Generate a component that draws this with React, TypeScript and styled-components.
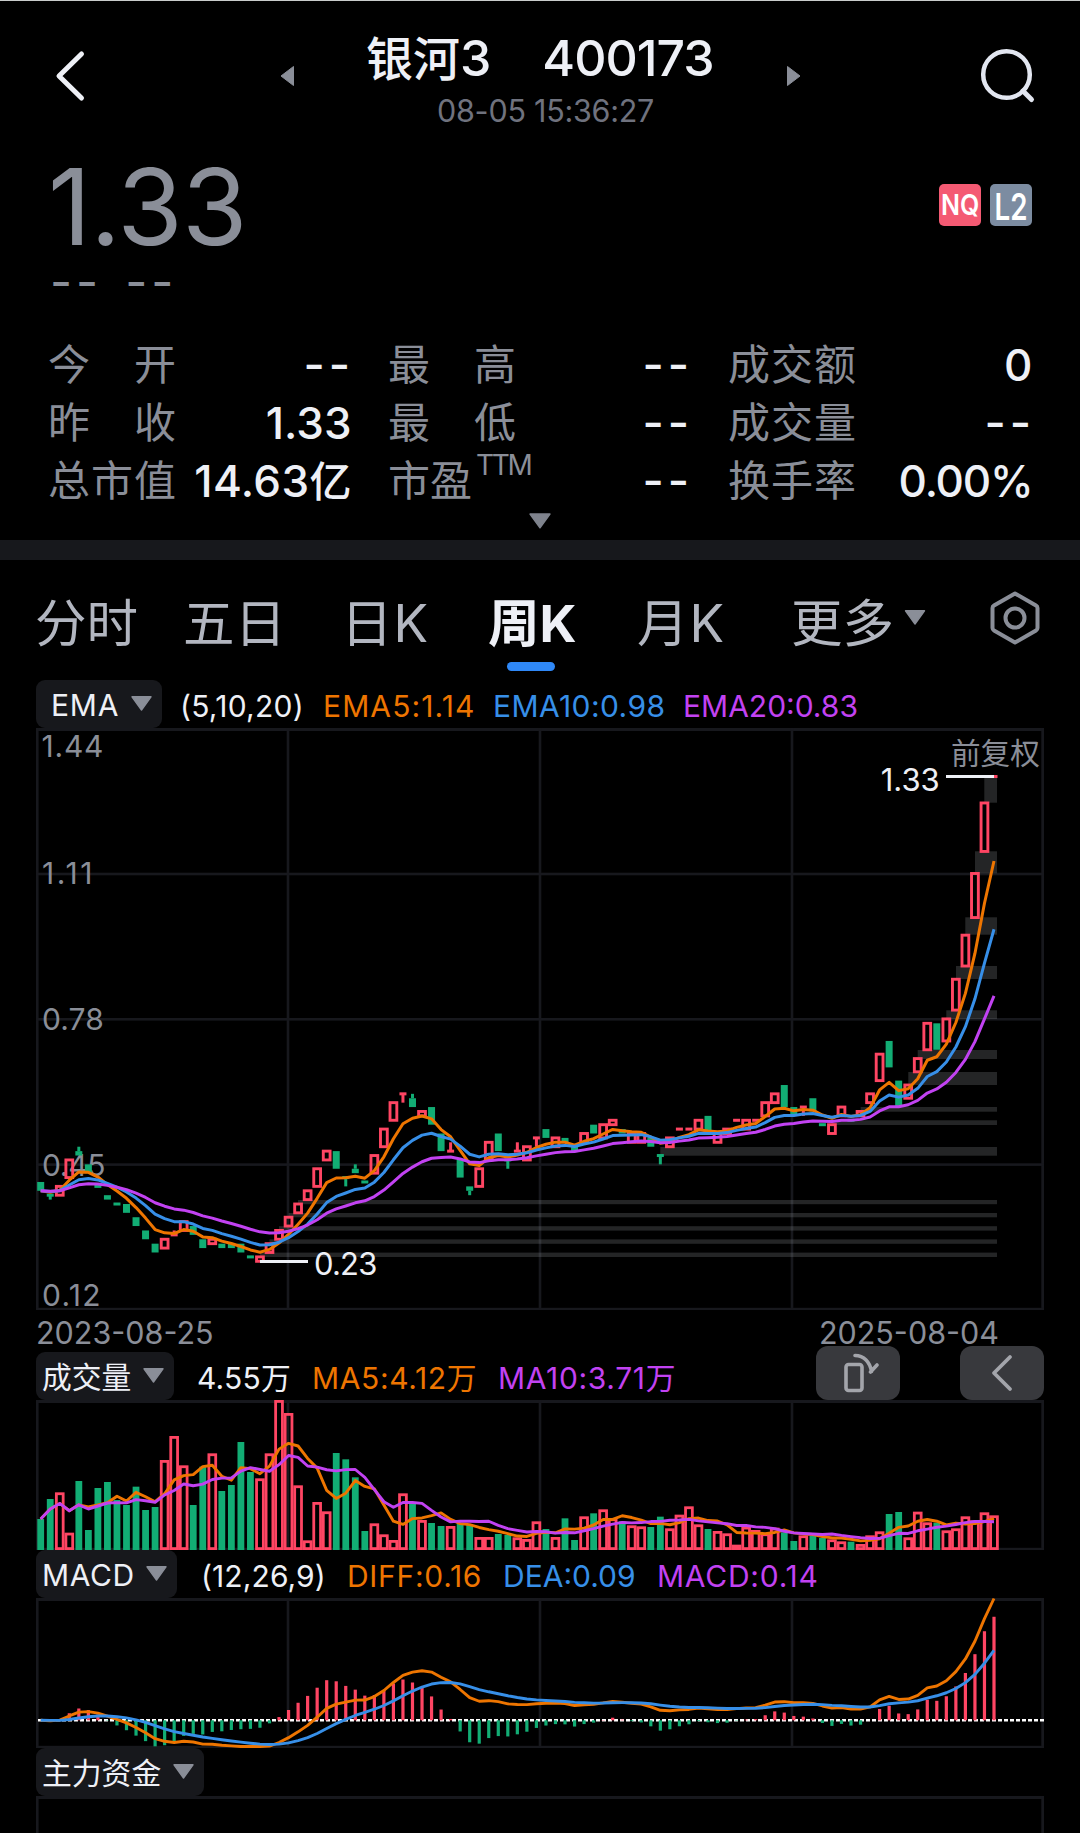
import React from 'react';
import styled, { createGlobalStyle } from 'styled-components';

const C = {
  bg: '#000000',
  band: '#17181c',
  grid: '#17181d',
  text: '#eef0f6',
  muted: '#8a8e98',
  dim: '#6f727e',
  tab: '#b2b6c0',
  red: '#ff4563',
  green: '#12ad74',
  orange: '#ee7500',
  blue: '#378fe8',
  purple: '#c242f2',
};

const FONT = `Inter, "Noto Sans CJK SC", sans-serif`;

const Global = createGlobalStyle`
  html, body { margin: 0; padding: 0; background: ${C.bg}; }
  * { box-sizing: border-box; }
`;

const Page = styled.main`
  width: 1080px;
  height: 1833px;
  overflow: hidden;
  background: ${C.bg};
  color: ${C.text};
  font-family: ${FONT};
  border-top: 1px solid #c9cccb;
  display: flex;
  flex-direction: column;
`;

/* ---------- header ---------- */
const Header = styled.header`
  height: 132px;
  flex: none;
  display: grid;
  grid-template-columns: 280px 20px 1fr 20px 280px;
  align-items: start;
`;
const IconCell = styled.div<{ $top: number; $left?: number }>`
  padding-top: ${(p) => p.$top}px;
  padding-left: ${(p) => p.$left ?? 0}px;
  svg { display: block; }
`;
const TitleBlock = styled.div`
  display: flex;
  flex-direction: column;
  align-items: flex-start;
  padding: 27px 0 0 66px;
`;
const Title = styled.h1`
  margin: 0;
  font-size: 50px;
  font-weight: 500;
  line-height: 60px;
  display: flex;
  gap: 51px;
  white-space: nowrap;
`;
const Name = styled.span`
  font-size: 47px;
  b { font-weight: 500; font-size: 50px; }
`;
const Code = styled.span`
  letter-spacing: -1px;
`;
const Stamp = styled.time`
  margin: 3px 0 0 71px;
  font-size: 30.5px;
  line-height: 37px;
  letter-spacing: -0.25px;
  color: ${C.dim};
  white-space: nowrap;
`;

/* ---------- quote ---------- */
const Quote = styled.section`
  height: 407px;
  flex: none;
  padding: 0 48px;
`;
const PriceRow = styled.div`
  display: flex;
  justify-content: space-between;
  height: 128px;
`;
const Price = styled.div`
  font-size: 106px;
  line-height: 130px;
  margin-top: 9px;
  letter-spacing: -0.8px;
  color: ${C.muted};
`;
const Badges = styled.div`
  display: flex;
  gap: 9px;
  padding-top: 51px;
`;
const Badge = styled.span<{ $bg: string; $size: number; $squeeze: number; $drop?: number }>`
  width: 42px;
  height: 42px;
  border-radius: 5px;
  background: ${(p) => p.$bg};
  color: #fff;
  display: flex;
  align-items: center;
  justify-content: center;
  font-size: ${(p) => p.$size}px;
  font-weight: 600;
  line-height: 42px;
  padding-top: ${(p) => p.$drop ?? 0}px;
  span { transform: scaleX(${(p) => p.$squeeze}); }
`;
const Change = styled.div`
  display: flex;
  gap: 23px;
  height: 44px;
  padding-left: 2px;
  font-size: 48px;
  line-height: 42px;
  letter-spacing: 4px;
  color: ${C.muted};
`;
const Stats = styled.div`
  display: grid;
  grid-template-columns: 303px 37px 302px 38px 304px;
  grid-auto-rows: 58px;
  padding-top: 31px;
  & > :nth-child(3n + 1) { grid-column: 1; }
  & > :nth-child(3n + 2) { grid-column: 3; }
  & > :nth-child(3n) { grid-column: 5; }
`;
const Stat = styled.div`
  display: flex;
  justify-content: space-between;
  line-height: 58px;
  white-space: nowrap;
`;
const Label = styled.span<{ $short?: boolean }>`
  width: ${(p) => (p.$short ? 'auto' : '128px')};
  display: flex;
  justify-content: space-between;
  font-size: 42px;
  color: ${C.muted};
`;
const Sup = styled.sup`
  font-size: 28px;
  line-height: 28px;
  margin: -1px 0 0 4px;
  letter-spacing: -2.4px;
  align-self: flex-start;
`;
const Value = styled.span<{ $dash?: boolean; $ls?: number }>`
  font-size: ${(p) => (p.$dash ? 46 : 44)}px;
  font-weight: 500;
  letter-spacing: ${(p) => (p.$dash ? 4 : p.$ls ?? 0)}px;
  margin-right: ${(p) => (p.$dash ? -3 : -0.5)}px;
  margin-top: ${(p) => (p.$dash ? -1 : 0)}px;
  i { font-style: normal; font-size: 42px; letter-spacing: 0; }
`;
const Expand = styled.div`
  display: flex;
  justify-content: center;
  padding: 3px 1px 0 0;
  svg { display: block; }
`;
const Band = styled.div`
  height: 20px;
  flex: none;
  background: ${C.band};
`;

/* ---------- tabs ---------- */
const Tabs = styled.nav`
  height: 120px;
  flex: none;
  display: grid;
  grid-template-columns: 148px 158px 147px 149px 154px 197px 1fr;
  padding: 33px 0 0 35px;
`;
const Tab = styled.div<{ $active?: boolean }>`
  position: relative;
  height: 78px;
  font-size: 51.5px;
  line-height: 61px;
  white-space: nowrap;
  color: ${(p) => (p.$active ? C.text : C.tab)};
  font-weight: ${(p) => (p.$active ? 700 : 400)};
  display: flex;
  align-items: flex-start;
  &::after {
    content: '';
    display: ${(p) => (p.$active ? 'block' : 'none')};
    position: absolute;
    left: 19px;
    top: 69px;
    width: 48px;
    height: 9px;
    border-radius: 5px;
    background: #2f88f7;
  }
`;
const Latin = styled.span`
  margin-left: 1px;
`;
const TabArrow = styled.span`
  padding: 17px 0 0 10px;
  svg { display: block; }
`;
const Hexagon = styled.svg`
  display: block;
  margin-top: -3px;
`;

/* ---------- indicator rows ---------- */
const Legend = styled.div<{ $h: number; $cols: string; $pt?: number }>`
  height: ${(p) => p.$h}px;
  flex: none;
  display: grid;
  grid-template-columns: ${(p) => p.$cols};
  padding: ${(p) => p.$pt ?? 0}px 36px 0 36px;
  align-items: start;
`;
const Pill = styled.div<{ $w: number; $pad: number; $ls?: number }>`
  width: ${(p) => p.$w}px;
  height: 48px;
  border-radius: 9px;
  background: ${C.band};
  padding: 2px 10.5px 0 ${(p) => p.$pad}px;
  display: flex;
  align-items: center;
  justify-content: space-between;
  font-size: 30px;
  line-height: 46px;
  letter-spacing: ${(p) => p.$ls ?? 0}px;
  white-space: nowrap;
  svg { display: block; margin-top: -3px; }
`;
const Cjk = styled.span`
  font-size: 29.8px;
`;
const Item = styled.span<{ $c: string; $ls?: number }>`
  font-size: 30px;
  line-height: 52px;
  white-space: nowrap;
  color: ${(p) => p.$c};
  letter-spacing: ${(p) => p.$ls ?? 0}px;
`;
const DateRow = styled.div`
  height: 36px;
  flex: none;
  display: flex;
  justify-content: space-between;
  padding: 4px 81px 0 36px;
  font-size: 30.5px;
  line-height: 37px;
  color: ${C.muted};
`;
const ToolButton = styled.div`
  width: 84px;
  height: 54px;
  margin-top: -6px;
  border-radius: 12px;
  background: #38393d;
  display: flex;
  align-items: center;
  justify-content: center;
`;
const Panel = styled.svg`
  display: block;
  flex: none;
  overflow: visible;
  font-family: ${FONT};
`;

/* ---------- data (prices in cents): open, close, high, low, direction ---------- */
type K = [number, number, number, number, number];
const g = (o: number, c: number, h = o, l = c): K => [o, c, h, l, -1];
const r = (o: number, c: number, h = c, l = o): K => [o, c, h, l, 1];
const K_LINES: K[] = [
  g(41, 39), g(38, 38, 38, 37), r(38, 40), r(42, 46), g(48, 47, 49), g(45, 43), g(40, 40), g(38, 37), g(36, 36), g(36, 34),
  g(33, 31), g(30, 28), g(27, 25), r(26, 28), r(29, 29, 30), r(30, 32), g(31, 29), g(28, 26), r(27, 28), g(27, 26),
  g(27, 26), g(27, 25), g(24, 24), r(23, 24), r(25, 27), r(28, 30), r(31, 33), r(34, 36), r(37, 39), r(40, 44),
  r(46, 48), g(48, 44), g(42, 42, 42, 40), g(44, 43, 45), g(41, 41), r(43, 47), r(49, 53), r(55, 59), r(61, 61, 61, 59), g(60, 58, 61),
  r(56, 57), g(58, 54), g(52, 48), r(48, 48, 50), g(46, 42), g(40, 39, 40, 38), r(40, 44), r(46, 50), g(52, 48), g(46, 46, 46, 44),
  r(48, 48, 50), r(46, 49), r(51, 51, 51, 49), g(53, 51), r(49, 51), g(51, 50), g(49, 48), r(50, 52), g(54, 52), r(51, 54),
  r(54, 55), g(53, 52), r(50, 52), r(50, 52), g(51, 49), g(47, 47, 47, 45), r(49, 51), r(53, 53), r(53, 53), r(53, 55),
  g(56, 52), r(50, 52), r(52, 53), r(55, 55), r(53, 55), r(55, 55), r(56, 59), r(59, 61), g(63, 58), g(58, 56),
  r(58, 58, 58, 56), g(60, 57), g(54, 54), r(52, 54), r(56, 58), g(55, 55), r(56, 57), r(59, 61), r(64, 70), g(73, 67),
  g(64, 58), r(60, 63), r(66, 69), r(71, 77), g(77, 71), r(73, 78), r(80, 87), r(90, 97), r(101, 111), r(116, 127),
  r(133, 133),
];
/* distance of each volume bar's top below the panel's top edge, in thirds of a pixel */
const VOL_TOP = [
  657, 597, 577, 698, 543, 690, 564, 546, 600, 615, 560, 630, 621, 480, 408, 496, 615, 500, 460, 573,
  555, 426, 516, 535, 460, 300, 339, 556, 721, 606, 634, 459, 478, 532, 693, 670, 703, 720, 580, 606,
  660, 669, 678, 678, 670, 675, 711, 711, 702, 705, 712, 717, 664, 687, 711, 655, 720, 649, 640, 628,
  655, 664, 676, 679, 681, 650, 685, 644, 619, 673, 687, 693, 700, 734, 680, 690, 700, 683, 697, 723,
  706, 708, 714, 718, 724, 725, 732, 706, 694, 642, 636, 712, 635, 667, 668, 691, 685, 649, 661, 637,
  646,
].map((v) => (v - 300) / 3);

/* price gaps: x start, y top, y bottom */
const GAPS = [
  [984.3, 776.5, 802.7], [975, 851.3, 873.3], [965.3, 917.3, 934.7], [956, 966, 979],
  [946.3, 1010.3, 1019], [917.7, 1050, 1059], [908.3, 1072, 1085], [860.7, 1107, 1111.7],
  [832, 1120.3, 1125], [660.3, 1147, 1155.7], [298, 1200, 1204.2], [288.7, 1213, 1217.3],
  [279, 1226.2, 1230.6], [269.5, 1239.4, 1243.8], [260, 1252.6, 1257],
];

const X = (i: number) => 40.7 + 9.533 * i;
const ema = (src: number[], n: number) => {
  const out = [src[0]];
  for (let i = 1; i < src.length; i++) out.push(out[i - 1] + (2 / (n + 1)) * (src[i] - out[i - 1]));
  return out;
};
const ma = (src: number[], n: number) =>
  src.map((_, i) => {
    const s = src.slice(Math.max(0, i - n + 1), i + 1);
    return s.reduce((a, b) => a + b, 0) / s.length;
  });
const path = (ys: number[]) => ys.map((y, i) => `${i ? 'L' : 'M'}${X(i).toFixed(2)} ${y.toFixed(2)}`).join('');

const Frame = ({ top, h, rows = 0, cut = true }: { top: number; h: number; rows?: number; cut?: boolean }) => (
  <g fill={C.grid}>
    <rect x={36} y={top} width={1008} height={3} />
    <rect x={36} y={top} width={2.6} height={h} />
    <rect x={1041.3} y={top} width={2.7} height={h} />
    {cut && [286.7, 538.7, 790.7].map((x) => <rect key={x} x={x} y={top} width={2.6} height={h} />)}
    {Array.from({ length: rows }, (_, i) => (
      <rect key={i} x={36} y={top + 145.3 * (i + 1) - 0.6} width={1008} height={2.6} />
    ))}
    {cut && <rect x={36} y={top + h - 2.2} width={1008} height={2.2} />}
  </g>
);

const CLOSES = K_LINES.map((k) => k[1]);

const PriceChart = () => {
  const T = 728;
  const y = (c: number) => 1261.3 - (c - 23) * 4.407 - T;
  const line = (n: number) => path(ema(CLOSES, n).map(y));
  return (
    <Panel width={1080} height={582} viewBox="0 0 1080 582">
      <Frame top={0} h={582} rows={3} />
      <g fontSize={30} fill={C.muted}>
        <text x={41.5} y={29} letterSpacing={0.8}>1.44</text>
        <text x={42} y={156} letterSpacing={2.6}>1.11</text>
        <text x={42} y={302} letterSpacing={0.1}>0.78</text>
        <text x={42} y={448} letterSpacing={-0.3}>0.45</text>
        <text x={42} y={577.5} letterSpacing={1.3}>0.12</text>
        <text x={951} y={35.8} fontSize={29.6}>前复权</text>
      </g>
      {GAPS.map(([x, a, b]) => (
        <rect key={a} x={x} y={a - T} width={997 - x} height={b - a} fill="#8e9298" fillOpacity={0.25} />
      ))}
      {K_LINES.map(([o, c, h, l, d], i) => {
        const x = X(i);
        const top = y(Math.max(o, c));
        const bot = y(Math.min(o, c));
        const col = d > 0 ? C.red : C.green;
        return (
          <g key={i} fill={col}>
            {h > Math.max(o, c) && <rect x={x - 1.5} y={y(h)} width={3} height={top - y(h)} />}
            {l < Math.min(o, c) && <rect x={x - 1.5} y={bot} width={3} height={y(l) - bot} />}
            {o === c ? (
              <rect x={x - 3.5} y={top - 1.5} width={7} height={3} />
            ) : d > 0 ? (
              <rect x={x - 3.4} y={top} width={6.8} height={bot - top} fill="none" stroke={C.red} strokeWidth={2.9} />
            ) : (
              <rect x={x - 3.5} y={top} width={7} height={bot - top} />
            )}
          </g>
        );
      })}
      <g fill="none" strokeWidth={3} strokeLinejoin="round">
        <path d={line(5)} stroke={C.orange} />
        <path d={line(10)} stroke={C.blue} />
        <path d={line(20)} stroke={C.purple} />
      </g>
      <g fill={C.text} fontSize={31}>
        <rect x={946} y={775 - T} width={48} height={3} />
        <rect x={260} y={1260 - T} width={48} height={3} />
        <text x={880.7} y={790.5 - T}>1.33</text>
        <text x={314} y={1275.3 - T} letterSpacing={-0.8}>0.23</text>
      </g>
    </Panel>
  );
};

const VolumeChart = () => (
  <Panel width={1080} height={150} viewBox="0 0 1080 150">
    <Frame top={0} h={150} />
    {VOL_TOP.map((t, i) =>
      K_LINES[i][4] > 0 ? (
        <rect key={i} x={X(i) - 3.4} y={t + 1.4} width={6.8} height={147.2 - t} fill="none" stroke={C.red} strokeWidth={2.8} />
      ) : (
        <rect key={i} x={X(i) - 3.4} y={t} width={6.8} height={150 - t} fill={C.green} />
      ),
    )}
    <g fill="none" strokeWidth={2.9} strokeLinejoin="round">
      <path d={path(ma(VOL_TOP, 5))} stroke={C.orange} />
      <path d={path(ma(VOL_TOP, 10))} stroke={C.purple} />
    </g>
  </Panel>
);

const MacdChart = () => {
  const slow = ema(CLOSES, 26);
  const diff = ema(CLOSES, 12).map((v, i) => v - slow[i]);
  const dea = ema(diff, 9);
  const zero = 122.3;
  const k = 121.8 / diff[diff.length - 1];
  return (
    <Panel width={1080} height={150} viewBox="0 0 1080 150">
      <Frame top={0} h={150} />
      <line x1={38} x2={1044} y1={zero} y2={zero} stroke="#fff" strokeWidth={2.4} strokeDasharray="4 2" />
      {diff.map((d, i) => {
        const v = 2 * (d - dea[i]) * k;
        return (
          <rect key={i} x={X(i) - 1.6} y={v > 0 ? zero - v : zero} width={3.2} height={Math.abs(v)} fill={v > 0 ? C.red : C.green} />
        );
      })}
      <g fill="none" strokeWidth={2.9} strokeLinejoin="round">
        <path d={path(diff.map((d) => Math.min(148.5, zero - d * k)))} stroke={C.orange} />
        <path d={path(dea.map((d) => zero - d * k))} stroke={C.blue} />
      </g>
    </Panel>
  );
};

const Caret = ({ w = 21, h = 15, c = C.muted }: { w?: number; h?: number; c?: string }) => (
  <svg width={w} height={h} viewBox="0 0 21 15">
    <path d="M1 0.8H20L10.5 14Z" fill={c} stroke={c} strokeWidth={1.4} strokeLinejoin="round" />
  </svg>
);

const stats: { l: string; sup?: string; v: string; unit?: string; ls?: number }[] = [
  { l: '今开', v: '--' }, { l: '最高', v: '--' }, { l: '成交额', v: '0' },
  { l: '昨收', v: '1.33' }, { l: '最低', v: '--' }, { l: '成交量', v: '--' },
  { l: '总市值', v: '14.63', unit: '亿', ls: 0.4 }, { l: '市盈', sup: 'TTM', v: '--' }, { l: '换手率', v: '0.00%', ls: -1.2 },
];

export default function App() {
  return (
    <>
      <Global />
      <Page>
        <Header>
          <IconCell $top={49} $left={53}>
            <svg width="34" height="52" viewBox="0 0 34 52" fill="none">
              <path d="M28.500 4L6 26L28.500 48" stroke={C.text} strokeWidth="5" strokeLinecap="round" strokeLinejoin="round" />
            </svg>
          </IconCell>
          <IconCell $top={64}>
            <svg width="15" height="22" viewBox="0 0 15 22">
              <path d="M13.5 1.5V20.5L1 11Z" fill={C.muted} stroke={C.muted} strokeLinejoin="round" />
            </svg>
          </IconCell>
          <TitleBlock>
            <Title>
              <Name>银河<b>3</b></Name>
              <Code>400173</Code>
            </Title>
            <Stamp>08-05 15:36:27</Stamp>
          </TitleBlock>
          <IconCell $top={64} $left={6}>
            <svg width="15" height="22" viewBox="0 0 15 22">
              <path d="M1.5 1.5V20.5L14 11Z" fill={C.muted} stroke={C.muted} strokeLinejoin="round" />
            </svg>
          </IconCell>
          <IconCell $top={46} $left={178}>
            <svg width="60" height="60" viewBox="0 0 60 60" fill="none">
              <circle cx="28.5" cy="27.5" r="23.3" stroke="#e2e6f0" strokeWidth="4.5" />
              <path d="M45 44L53.5 52.5" stroke="#e2e6f0" strokeWidth="5" strokeLinecap="round" />
            </svg>
          </IconCell>
        </Header>

        <Quote>
          <PriceRow>
            <Price>1.33</Price>
            <Badges>
              <Badge $bg="#f45a73" $size={29} $squeeze={0.86}><span>NQ</span></Badge>
              <Badge $bg="#7c8ca1" $size={37} $squeeze={0.75} $drop={3}><span>L2</span></Badge>
            </Badges>
          </PriceRow>
          <Change>
            <span>--</span>
            <span>--</span>
          </Change>
          <Stats>
            {stats.map((s) => (
              <Stat key={s.l}>
                <Label $short={!!s.sup}>
                  {[...s.l].map((ch) => <span key={ch}>{ch}</span>)}
                  {s.sup && <Sup>{s.sup}</Sup>}
                </Label>
                <Value $dash={s.v === '--'} $ls={s.ls}>{s.v}{s.unit && <i>{s.unit}</i>}</Value>
              </Stat>
            ))}
          </Stats>
          <Expand><Caret w={22} h={16} c="#7f838d" /></Expand>
        </Quote>
        <Band />

        <Tabs>
          <Tab>分时</Tab>
          <Tab>五日</Tab>
          <Tab>日<Latin>K</Latin></Tab>
          <Tab $active>周K</Tab>
          <Tab>月<Latin>K</Latin></Tab>
          <Tab>更多<TabArrow><Caret w={22} h={15} /></TabArrow></Tab>
          <Hexagon width="54" height="58" viewBox="0 0 54 58" fill="none" stroke={C.muted} strokeWidth="4" strokeLinejoin="round">
            <path d="M27 3.5L48 15.5Q49.5 16.4 49.5 18V38Q49.5 39.6 48 40.5L27 52.5L6 40.5Q4.500 39.6 4.500 38V18Q4.500 16.4 6 15.5Z" />
            <circle cx="27" cy="28" r="9.500" />
          </Hexagon>
        </Tabs>

        <Legend $h={48} $cols="144px 143px 170px 190px 1fr">
          <Pill $w={126} $pad={15} $ls={0.8}>EMA<Caret /></Pill>
          <Item $c={C.text} $ls={0.25}>(5,10,20)</Item>
          <Item $c={C.orange} $ls={1.1}>EMA5:1.14</Item>
          <Item $c={C.blue} $ls={0.4}>EMA10:0.98</Item>
          <Item $c={C.purple}>EMA20:0.83</Item>
        </Legend>
        <PriceChart />
        <DateRow><span>2023-08-25</span><span>2025-08-04</span></DateRow>
        <Legend $h={54} $pt={6} $cols="161px 115px 186px 318px 144px 84px">
          <Pill $w={138} $pad={6}><Cjk>成交量</Cjk><Caret /></Pill>
          <Item $c={C.text} $ls={0.2}>4.55<Cjk>万</Cjk></Item>
          <Item $c={C.orange} $ls={0.65}>MA5:4.12<Cjk>万</Cjk></Item>
          <Item $c={C.purple} $ls={0.65}>MA10:3.71<Cjk>万</Cjk></Item>
          <ToolButton>
            <svg width="42" height="46" viewBox="0 0 42 46" fill="none" stroke="#a3a5ab" strokeWidth="3.6" strokeLinejoin="round" strokeLinecap="round">
              <rect x="9" y="14.500" width="16" height="26" rx="2.500" />
              <path d="M18 5.500C27 5.500 33 12 34.500 21.500M33.500 22L40 15" />
            </svg>
          </ToolButton>
          <ToolButton>
            <svg width="24" height="40" viewBox="0 0 24 40" fill="none" stroke="#a3a5ab" strokeWidth="3.800" strokeLinecap="round" strokeLinejoin="round">
              <path d="M20 4L4 20L20 36" />
            </svg>
          </ToolButton>
        </Legend>
        <VolumeChart />
        <Legend $h={48} $cols="165px 146px 156px 154px 1fr">
          <Pill $w={141} $pad={6} $ls={0.6}>MACD<Caret /></Pill>
          <Item $c={C.text} $ls={0.1}>(12,26,9)</Item>
          <Item $c={C.orange} $ls={0.7}>DIFF:0.16</Item>
          <Item $c={C.blue}>DEA:0.09</Item>
          <Item $c={C.purple} $ls={0.75}>MACD:0.14</Item>
        </Legend>
        <MacdChart />
        <Legend $h={48} $cols="168px 1fr">
          <Pill $w={168} $pad={6}><Cjk>主力资金</Cjk><Caret /></Pill>
        </Legend>
        <Panel width={1080} height={37} viewBox="0 0 1080 37">
          <Frame top={0} h={37} cut={false} />
        </Panel>
      </Page>
    </>
  );
}
